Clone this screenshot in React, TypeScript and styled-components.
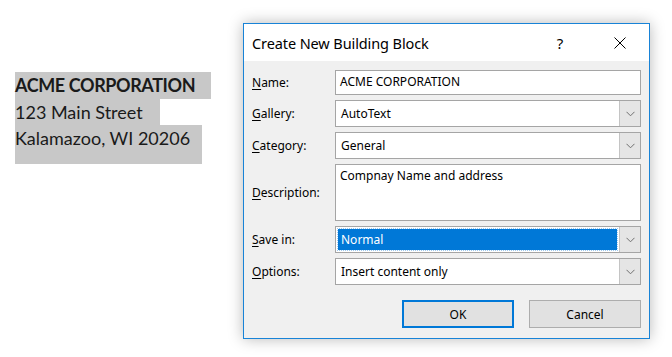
import React from 'react';
import styled, { createGlobalStyle } from 'styled-components';

const GlobalStyle = createGlobalStyle`
  html, body {
    margin: 0;
    padding: 0;
    background: #ffffff;
  }
  * {
    box-sizing: border-box;
  }
`;

const Page = styled.div`
  display: flex;
  align-items: flex-start;
  width: 672px;
  height: 357px;
  padding: 23px 0 0 15px;
  overflow: hidden;
`;

const DocArea = styled.div`
  width: 228px;
  margin-top: 49px;
  display: flex;
  flex-direction: column;
  align-items: flex-start;
  font-family: Lato, "Open Sans", sans-serif;
  font-size: 18px;
  color: #1a1a1a;
`;

const DocLine = styled.div<{ $pad: number; $bold?: boolean; $tall?: boolean }>`
  background: #c8c8c8;
  height: ${(p) => (p.$tall ? 39 : 26.5)}px;
  line-height: 26.5px;
  padding-right: ${(p) => p.$pad}px;
  font-weight: ${(p) => (p.$bold ? 700 : 400)};
  letter-spacing: ${(p) => (p.$bold ? '-0.4px' : '0')};
  white-space: nowrap;
`;

const Dialog = styled.div`
  width: 407px;
  height: 316px;
  border: 1px solid #1883d7;
  background: #f0f0f0;
  box-shadow: 0 0 14px rgba(0, 0, 0, 0.28);
  display: flex;
  flex-direction: column;
  font-family: "Noto Sans", "Open Sans", sans-serif;
  font-size: 12px;
  color: #000;
`;

const TitleBar = styled.div`
  height: 37px;
  background: #ffffff;
  display: flex;
  align-items: center;
  padding-left: 8px;
`;

const TitleText = styled.div`
  flex: 1;
  font-size: 14.5px;
  letter-spacing: -0.1px;
`;

const HelpGlyph = styled.div`
  width: 46px;
  text-align: center;
  font-size: 15px;
  margin-right: 14px;
`;

const CloseButton = styled.div`
  width: 46px;
  height: 37px;
  display: flex;
  align-items: center;
  justify-content: center;
  margin-right: 6px;
`;

const Body = styled.div`
  flex: 1;
  padding: 9px 8px 0 8px;
  display: flex;
  flex-direction: column;
`;

const Form = styled.div`
  display: grid;
  grid-template-columns: 83px 1fr;
  row-gap: 5px;
  align-items: center;
`;

const Label = styled.div`
  white-space: nowrap;
  u {
    text-decoration: underline;
    text-underline-offset: 2px;
  }
`;

const TextField = styled.div<{ $h: number }>`
  height: ${(p) => p.$h}px;
  background: #ffffff;
  border: 1px solid #a5a5a5;
  padding: 3px 4px;
  line-height: 16px;
`;

const Combo = styled.div`
  height: 27px;
  background: #ffffff;
  border: 1px solid #a5a5a5;
  display: flex;
`;

const ComboValue = styled.div<{ $selected?: boolean }>`
  flex: 1;
  margin: 2px;
  padding-left: 3px;
  display: flex;
  align-items: center;
  background: ${(p) => (p.$selected ? '#0078d7' : 'transparent')};
  color: ${(p) => (p.$selected ? '#ffffff' : '#000000')};
  outline: ${(p) => (p.$selected ? '1px dotted #9cc8ee' : 'none')};
`;

const ComboArrow = styled.div`
  width: 21px;
  background: #e5e5e5;
  border-left: 1px solid #c4c4c4;
  display: flex;
  align-items: center;
  justify-content: center;
`;

const ButtonRow = styled.div`
  display: flex;
  justify-content: flex-end;
  gap: 15px;
  margin-top: 15px;
`;

const Button = styled.div<{ $default?: boolean }>`
  width: 112px;
  height: 28px;
  background: #e1e1e1;
  border: ${(p) => (p.$default ? '2px solid #0078d7' : '1px solid #adadad')};
  display: flex;
  align-items: center;
  justify-content: center;
`;

const Chevron = () => (
  <svg width="9" height="6" viewBox="0 0 9 6">
    <path d="M0.5 0.8 L4.5 4.8 L8.5 0.8" fill="none" stroke="#707070" strokeWidth="1" />
  </svg>
);

const CloseIcon = () => (
  <svg width="12" height="12" viewBox="0 0 12 12">
    <path d="M0.5 0.5 L11.5 11.5 M11.5 0.5 L0.5 11.5" stroke="#000" strokeWidth="1" />
  </svg>
);

interface ComboBoxProps {
  value: string;
  selected?: boolean;
}

const ComboBox: React.FC<ComboBoxProps> = ({ value, selected }) => (
  <Combo>
    <ComboValue $selected={selected}>{value}</ComboValue>
    <ComboArrow>
      <Chevron />
    </ComboArrow>
  </Combo>
);

const App: React.FC = () => {
  return (
    <>
      <GlobalStyle />
      <Page>
        <DocArea>
          <DocLine $pad={16} $bold>ACME CORPORATION</DocLine>
          <DocLine $pad={17}>123 Main Street</DocLine>
          <DocLine $pad={12} $tall>Kalamazoo, WI 20206</DocLine>
        </DocArea>

        <Dialog>
          <TitleBar>
            <TitleText>Create New Building Block</TitleText>
            <HelpGlyph>?</HelpGlyph>
            <CloseButton>
              <CloseIcon />
            </CloseButton>
          </TitleBar>
          <Body>
            <Form>
              <Label><u>N</u>ame:</Label>
              <TextField $h={25}>ACME CORPORATION</TextField>

              <Label><u>G</u>allery:</Label>
              <ComboBox value="AutoText" />

              <Label><u>C</u>ategory:</Label>
              <ComboBox value="General" />

              <Label><u>D</u>escription:</Label>
              <TextField $h={57}>Compnay Name and address</TextField>

              <Label><u>S</u>ave in:</Label>
              <ComboBox value="Normal" selected />

              <Label><u>O</u>ptions:</Label>
              <ComboBox value="Insert content only" />
            </Form>
            <ButtonRow>
              <Button $default>OK</Button>
              <Button>Cancel</Button>
            </ButtonRow>
          </Body>
        </Dialog>
      </Page>
    </>
  );
};

export default App;
